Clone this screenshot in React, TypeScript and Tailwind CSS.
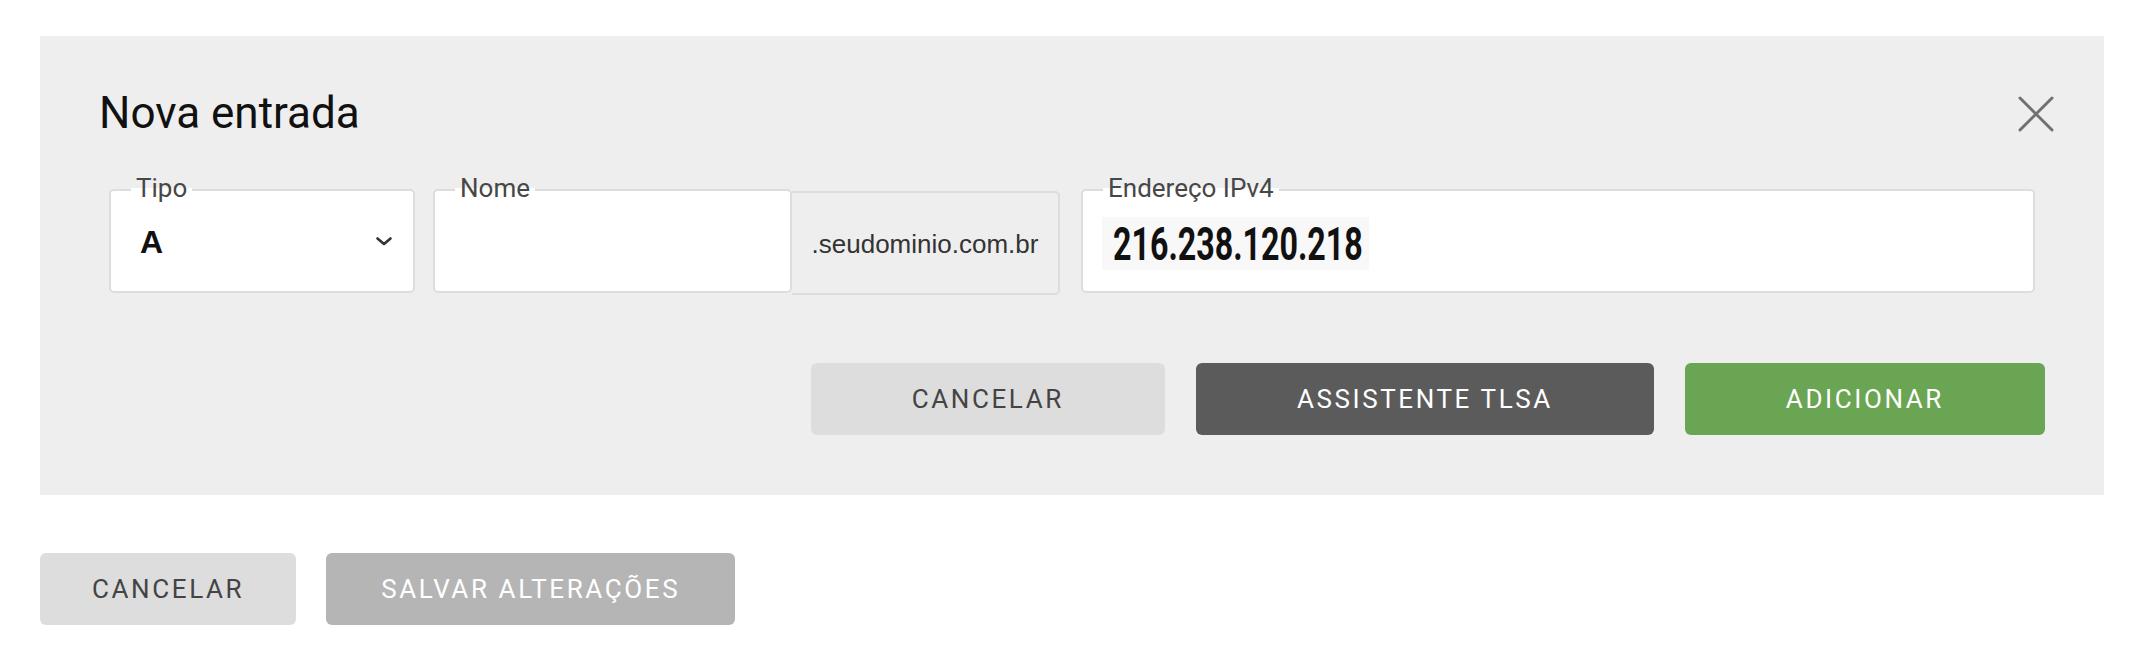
const labelCls =
  "absolute left-[20px] top-[-16px] px-[5px] text-[26px] leading-[26px] text-[#474747] font-['Roboto',sans-serif] bg-[linear-gradient(to_bottom,#eeeeee_50%,#ffffff_50%)]";

const FieldLabel = ({ children }: { children: string }) => <span className={labelCls}>{children}</span>;

const Chevron = () => (
  <svg width="18" height="11" viewBox="0 0 18 11" className="shrink-0">
    <polyline points="2.5,2.5 9,8 15.5,2.5" fill="none" stroke="#333333" strokeWidth="2.6" strokeLinecap="round" strokeLinejoin="round" />
  </svg>
);

const CloseIcon = () => (
  <svg width="36" height="36" viewBox="0 0 36 36">
    <path d="M2 2 L34 34 M34 2 L2 34" stroke="#707070" strokeWidth="3" strokeLinecap="round" />
  </svg>
);

const btn =
  "h-[72px] rounded-[6px] text-[26px] tracking-[0.1em] font-['Roboto',sans-serif] flex items-center justify-center";

const App = () => (
  <div className="min-h-screen bg-white px-[40px] pt-[36px]">
    <section className="bg-[#eeeeee] px-[50px] pt-[56px] pb-[60px]">
      <div className="flex items-center justify-between pl-[9px]">
        <h2 className="text-[44px] leading-[43px] text-[#111111] font-['Roboto',sans-serif]">Nova entrada</h2>
        <button className="w-[36px] h-[36px]">
          <CloseIcon />
        </button>
      </div>

      <div className="mx-[19px] mt-[54px] flex items-start">
        <div className="relative w-[306px] h-[104px] shrink-0 rounded-[5px] border-2 border-[#dddddd] bg-white flex items-center pl-[29px] pr-[20px]">
          <FieldLabel>Tipo</FieldLabel>
          <span className="flex-1 pt-[1px] text-[32px] font-bold text-[#111111] font-['Liberation_Sans',sans-serif]">A</span>
          <Chevron />
        </div>

        <div className="ml-[18px] flex items-start shrink-0">
          <div className="relative w-[359px] h-[104px] rounded-[5px] border-2 border-[#dddddd] bg-white">
            <FieldLabel>Nome</FieldLabel>
          </div>
          <div className="mt-[2px] w-[268px] h-[104px] rounded-r-[5px] border-2 border-l-0 border-[#dddddd] bg-[#eeeeee] flex items-center justify-center pt-[2px] text-[26px] text-[#333333] font-['Liberation_Sans',sans-serif]">
            .seudominio.com.br
          </div>
        </div>

        <div className="relative ml-[21px] flex-1 h-[104px] rounded-[5px] border-2 border-[#dddddd] bg-white flex items-center pl-[19px] pt-[5px]">
          <FieldLabel>Endereço IPv4</FieldLabel>
          <span className="w-[267px] h-[53px] bg-[#f8f8f8] flex items-center px-[11px] whitespace-nowrap">
            <span className="origin-left scale-x-[0.7] text-[46px] leading-none font-bold text-[#111111] font-['Roboto',sans-serif]">
              216.238.120.218
            </span>
          </span>
        </div>
      </div>

      <div className="mt-[68px] flex justify-end gap-[31px] pr-[9px]">
        <button className={`${btn} px-[101px] bg-[#dddddd] text-[#444444]`}>CANCELAR</button>
        <button className={`${btn} px-[101px] bg-[#5b5b5b] text-white`}>ASSISTENTE TLSA</button>
        <button className={`${btn} px-[101px] bg-[#6aa553] text-white`}>ADICIONAR</button>
      </div>
    </section>

    <div className="mt-[58px] flex gap-[30px]">
      <button className={`${btn} px-[52px] bg-[#dddddd] text-[#444444]`}>CANCELAR</button>
      <button className={`${btn} px-[55px] bg-[#b5b5b5] text-white`}>SALVAR ALTERAÇÕES</button>
    </div>
  </div>
);

export default App;
